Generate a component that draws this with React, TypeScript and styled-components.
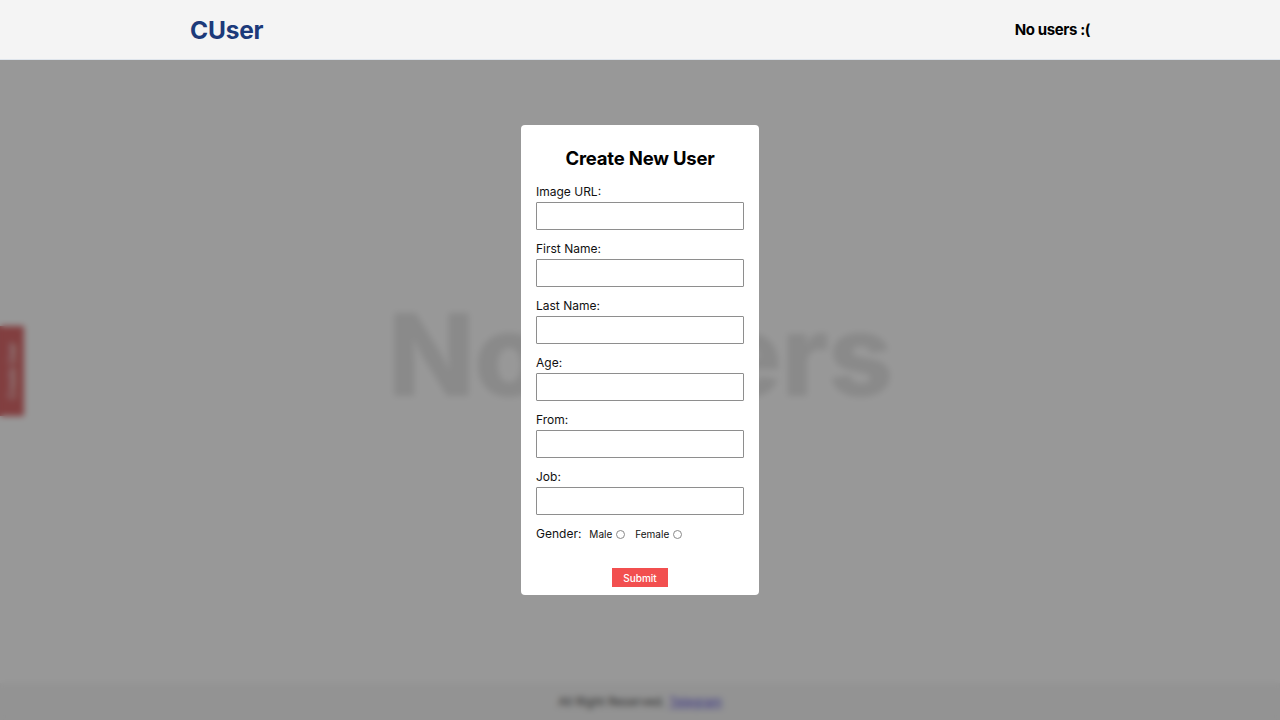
import React from "react";
import styled, { createGlobalStyle } from "styled-components";

const GlobalStyle = createGlobalStyle`
  html, body { margin: 0; padding: 0; }
  body {
    font-family: Inter, "Noto Sans", Arial, sans-serif;
    background: #ffffff;
    color: #111;
    width: 1280px;
    height: 720px;
    overflow: hidden;
  }
  * { box-sizing: border-box; }
`;

const Page = styled.div`
  display: flex;
  flex-direction: column;
  height: 720px;
`;

const Header = styled.header`
  position: relative;
  z-index: 20;
  height: 60px;
  background: #f4f4f4;
  border-bottom: 1px solid #dfe5ec;
  display: flex;
  justify-content: center;
`;

const HeaderInner = styled.div`
  width: 900px;
  display: flex;
  align-items: center;
  justify-content: space-between;
`;

const Logo = styled.div`
  font-size: 24.5px;
  font-weight: 700;
  color: #1c3a7a;
  letter-spacing: -0.2px;
  padding-top: 1px;
`;

const UserCount = styled.div`
  font-size: 15px;
  font-weight: 700;
  color: #000;
  letter-spacing: -0.4px;
`;

const Main = styled.main`
  flex: 1;
  display: flex;
  align-items: center;
  justify-content: center;
  position: relative;
`;

const EmptyText = styled.h1`
  margin: 0;
  font-size: 114px;
  font-weight: 800;
  color: #e2e2e2;
  letter-spacing: -1px;
  padding-bottom: 34px;
`;

const SideTab = styled.button`
  position: absolute;
  left: 0;
  top: 266px;
  width: 24px;
  height: 90px;
  border: none;
  padding: 0;
  background: #d24c4e;
  color: #fff;
  font-family: inherit;
  font-size: 10px;
  writing-mode: vertical-rl;
  transform: rotate(180deg);
`;

const Footer = styled.footer`
  height: 37px;
  background: #f4f4f4;
  display: flex;
  align-items: center;
  justify-content: center;
  font-size: 12px;
  color: #222;
  gap: 4px;
`;

const FooterLink = styled.a`
  color: #3b2fd6;
  text-decoration: underline;
`;

const Overlay = styled.div`
  position: fixed;
  left: 0;
  right: 0;
  top: 60px;
  bottom: 0;
  z-index: 10;
  background: rgba(50, 50, 50, 0.5);
  backdrop-filter: blur(3px);
`;

const Modal = styled.form`
  position: fixed;
  z-index: 30;
  left: 521px;
  top: 125px;
  width: 238px;
  height: 470px;
  background: #fff;
  border-radius: 4px;
  padding: 21px 15px 8px;
  display: flex;
  flex-direction: column;
`;

const Title = styled.h2`
  margin: 0 0 13px;
  font-size: 18.5px;
  line-height: 24px;
  font-weight: 700;
  text-align: center;
  color: #000;
  letter-spacing: -0.2px;
`;

const Field = styled.div`
  display: flex;
  flex-direction: column;
  gap: 2px;
  margin-bottom: 10px;
`;

const Label = styled.label`
  font-size: 12px;
  line-height: 16px;
  padding-top: 1px;
  color: #111;
`;

const Input = styled.input`
  width: 208px;
  height: 28px;
  border: 1px solid #8e8e8e;
  border-radius: 1px;
  padding: 0 4px;
  font-family: inherit;
  background: #fff;
`;

const GenderRow = styled.div`
  display: flex;
  align-items: center;
  height: 16px;
  margin-top: 1px;
  font-size: 12px;
  line-height: 16px;
  color: #111;
`;

const Option = styled.label`
  display: flex;
  align-items: center;
  gap: 4px;
  font-size: 10px;
  margin-left: ${(p: { $gap: number }) => p.$gap}px;
`;

const Radio = styled.input`
  appearance: none;
  margin: 0;
  width: 9px;
  height: 9px;
  border: 1px solid #8a8a8a;
  border-radius: 50%;
  background: #fff;
`;

const SubmitRow = styled.div`
  display: flex;
  justify-content: center;
  margin-top: 26px;
`;

const Submit = styled.button`
  width: 56px;
  height: 19px;
  border: none;
  padding: 0;
  background: #f24f4f;
  color: #fff;
  font-family: inherit;
  font-size: 10px;
  font-weight: 500;
`;

const fields = ["Image URL:", "First Name:", "Last Name:", "Age:", "From:", "Job:"];

export default function App() {
  return (
    <>
      <GlobalStyle />
      <Page>
        <Header>
          <HeaderInner>
            <Logo>CUser</Logo>
            <UserCount>No users :(</UserCount>
          </HeaderInner>
        </Header>
        <Main>
          <SideTab type="button">Create User</SideTab>
          <EmptyText>No Users</EmptyText>
        </Main>
        <Footer>
          All Right Reserved. <FooterLink href="#">Telegram</FooterLink>
        </Footer>
      </Page>
      <Overlay />
      <Modal onSubmit={(e) => e.preventDefault()}>
        <Title>Create New User</Title>
        {fields.map((f) => (
          <Field key={f}>
            <Label>{f}</Label>
            <Input type="text" />
          </Field>
        ))}
        <GenderRow>
          Gender:
          <Option $gap={8}>
            Male <Radio type="radio" name="gender" />
          </Option>
          <Option $gap={10}>
            Female <Radio type="radio" name="gender" />
          </Option>
        </GenderRow>
        <SubmitRow>
          <Submit type="submit">Submit</Submit>
        </SubmitRow>
      </Modal>
    </>
  );
}
